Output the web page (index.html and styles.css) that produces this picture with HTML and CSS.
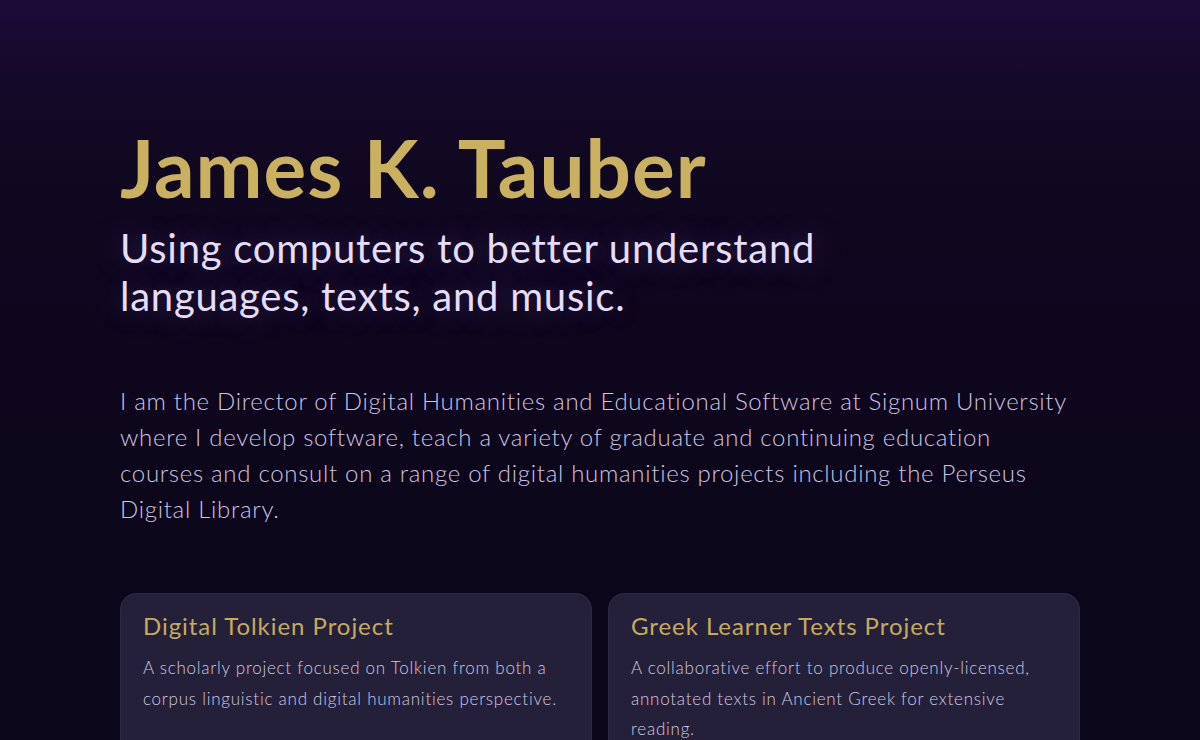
FILE: index.html
```
<!DOCTYPE html>
<html lang="en">
<head>
<meta charset="utf-8">
<title>James K. Tauber</title>
<link rel="stylesheet" href="styles.css">
</head>
<body>
<main class="page">
  <header class="hero">
    <h1 class="name">James K. Tauber</h1>
    <p class="tagline">Using computers to better understand<br>languages, texts, and music.</p>
  </header>
  <p class="intro">I am the Director of Digital Humanities and Educational Software at Signum University where I develop software, teach a variety of graduate and continuing education courses and consult on a range of digital humanities projects including the Perseus Digital Library.</p>
  <section class="projects">
    <article class="card">
      <h2 class="card-title">Digital Tolkien Project</h2>
      <p class="card-text">A scholarly project focused on Tolkien from both a corpus linguistic and digital humanities perspective.</p>
    </article>
    <article class="card">
      <h2 class="card-title">Greek Learner Texts Project</h2>
      <p class="card-text">A collaborative effort to produce openly-licensed, annotated texts in Ancient Greek for extensive reading.</p>
    </article>
  </section>
</main>
</body>
</html>
```
FILE: styles.css
```
html, body {
  margin: 0;
  padding: 0;
}
body {
  min-height: 100vh;
  background: linear-gradient(180deg, #1c0b38 0px, #150929 80px, #100720 170px, #0d061c 400px, #0c061a 740px);
  background-color: #0c061a;
  font-family: Lato, "Noto Sans", sans-serif;
  color: #e4dcf7;
  font-variant-ligatures: none;
}
.page {
  width: 960px;
  margin: 0 auto;
  padding-top: 123px;
}
.name {
  margin: 0;
  font-size: 80px;
  line-height: 88px;
  font-weight: 700;
  letter-spacing: 1px;
  color: #c9b15f;
}
.tagline {
  margin: 13px 0 0;
  font-size: 40px;
  line-height: 48px;
  font-weight: 400;
  letter-spacing: 0.75px;
  color: #e6ddf9;
  text-shadow: 0 0 30px rgba(170, 140, 230, 0.35);
}
.intro {
  margin: 63px 0 0;
  font-size: 24px;
  line-height: 36px;
  font-weight: 300;
  letter-spacing: 0.7px;
  color: #cdc3e3;
}
.projects {
  margin-top: 66px;
  display: grid;
  grid-template-columns: 1fr 1fr;
  gap: 16px;
}
.card {
  background: #25203a;
  border: 1px solid #2f2946;
  border-radius: 16px;
  padding: 17px 22px 24px;
  min-height: 200px;
}
.card-title {
  margin: 0;
  font-size: 24px;
  line-height: 29px;
  font-weight: 400;
  letter-spacing: 0.95px;
  color: #c6ab5c;
}
.card-text {
  margin: 13px 0 0;
  font-size: 17px;
  line-height: 30.6px;
  font-weight: 300;
  letter-spacing: 0.75px;
  color: #d0c8e0;
}
```
